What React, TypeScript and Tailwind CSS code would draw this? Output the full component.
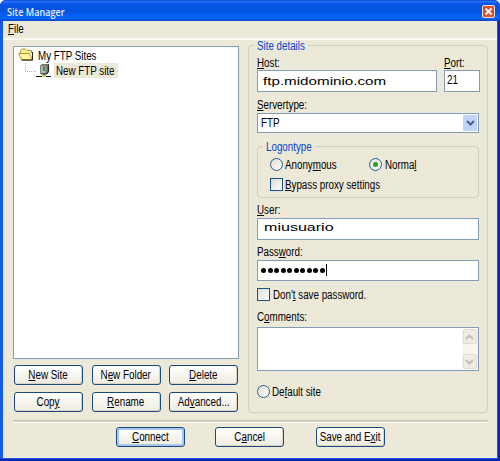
import type { ReactNode } from 'react'

function Label({ children, className = '' }: { children: ReactNode; className?: string }) {
  return (
    <div className={`h-3 text-[12px] leading-3 whitespace-nowrap ${className}`}>
      <span className="inline-block origin-left scale-x-[0.815]">{children}</span>
    </div>
  )
}

function Button({ children, primary = false }: { children: ReactNode; primary?: boolean }) {
  return (
    <button
      className={`flex h-5 w-[69px] shrink-0 items-center justify-center rounded-[3px] border border-[#1c4a80] bg-linear-to-b from-white to-[#eeebe0] text-[12px] leading-3 whitespace-nowrap ${primary ? 'shadow-[inset_0_0_0_2px_#a9c5f3]' : 'shadow-[inset_-1px_-1px_0_#d9d4c5]'}`}
    >
      <span className="inline-block scale-x-[0.82]">{children}</span>
    </button>
  )
}

function Radio({ checked = false }: { checked?: boolean }) {
  return (
    <span className="flex size-[13px] shrink-0 items-center justify-center rounded-full border border-[#2b5d8c] bg-linear-to-br from-[#dfded7] to-white">
      {checked && <span className="size-[5px] rounded-full bg-[#22a522]" />}
    </span>
  )
}

function Checkbox() {
  return <span className="size-[13px] shrink-0 border border-[#1c5180] bg-linear-to-br from-[#dcdcd5] to-white" />
}

function FolderIcon() {
  return (
    <svg className="-mt-[2px] h-[13px] w-4 shrink-0" viewBox="0 0 16 13">
      <path d="M2.5 8V2.5L4 1h3.5L9 2.5h4.5V5" fill="#f5ee99" stroke="#a8962f" />
      <path d="M.7 5.5h10.8l2.5 6H3.4z" fill="#fff6a0" stroke="#a8962f" />
      <path d="M3.5 12.2h11V4" fill="none" stroke="#292716" />
    </svg>
  )
}

function ServerIcon() {
  return (
    <svg className="h-[15px] w-4 shrink-0" viewBox="0 0 16 15">
      <path d="M4 2.5 6 1h7v7.5L11 11H4z" fill="#777" />
      <path d="M4.5 3H10v7.5H4.5z" fill="#b5b5b5" stroke="#858585" />
      <path d="M12.5 1.5v7L10.5 11H5" fill="none" stroke="#2c2c2c" strokeWidth="1.2" />
      <path d="M7 4h2v1H7z" fill="#d33" />
      <path d="M7 5h2v3H7z" fill="#19a653" />
      <path d="M8.5 11v2" stroke="#222" />
      <path d="M0 13h15v1H0z" fill="#111" />
      <path d="M6 12h4v2H6z" fill="#d6c84c" />
    </svg>
  )
}

function ScrollArrow({ up = false }: { up?: boolean }) {
  return (
    <span className="flex h-[15px] w-[14px] items-center justify-center rounded-[2px] border border-[#e1ded1] bg-[#efede3]">
      <svg className="h-[6px] w-[9px]" viewBox="0 0 9 6">
        <path d={up ? 'M1 5l3.5-3.5L8 5' : 'M1 1l3.5 3.5L8 1'} fill="none" stroke="#c3c1b4" strokeWidth="2" />
      </svg>
    </span>
  )
}

export default function SiteManager() {
  return (
    <main className="flex h-[461px] w-[500px] flex-col overflow-hidden rounded-t-[6px] bg-[#0b24b4] font-['Liberation_Sans',Arial,sans-serif] text-black">
      <header className="flex h-[21px] shrink-0 items-center justify-between bg-[linear-gradient(#0831b5_0,#2876ff_1px,#0754e7_4px,#0553df_11px,#0568ff_18px,#0346cb_21px)] pr-[5px] pl-[7px]">
        <h1 className="pt-[3px] font-['Open_Sans',sans-serif] text-[10px] leading-3 font-semibold whitespace-nowrap text-[#e4edff]">
          <span className="inline-block origin-left scale-x-[0.91]">Site Manager</span>
        </h1>
        <button className="mt-[2px] flex size-[13px] items-center justify-center rounded-[2px] border border-[#f1dfda] bg-[#da5132]">
          <svg className="size-[9px]" viewBox="0 0 9 9">
            <path d="M1.5 1.5l6 6m0-6-6 6" stroke="#fff" strokeWidth="1.8" />
          </svg>
        </button>
      </header>

      <div className="mr-[3px] mb-[3px] flex grow flex-col border-l-[3px] border-[#155cec] bg-[#ece9d8] shadow-[1px_1px_0_#155cec]">
        <nav className="h-[19px] border-b-2 border-[#faf9f2] pt-[2px] pl-[5px]">
          <Label><u>F</u>ile</Label>
        </nav>

        <div className="flex pt-[5px] pl-[10px]">
          <section className="mt-px w-[226px]">
            <div className="h-[313px] border border-[#7f9db9] bg-white pt-px pl-1">
              <div className="flex h-[15px] items-center">
                <FolderIcon />
                <Label className="ml-1">My FTP Sites</Label>
              </div>
              <div className="flex h-[15px] items-center">
                <span className="ml-[7px] h-[9px] w-[11px] self-start border-b border-l border-dotted border-[#b5b5ad]" />
                <ServerIcon />
                <span className="ml-[2px] flex h-[15px] w-[64px] items-center bg-[#ece9d8] pl-[2px]">
                  <Label>New FTP site</Label>
                </span>
              </div>
            </div>
            <div className="mt-[6px] ml-px grid grid-cols-[69px_69px_69px] gap-x-[8.5px] gap-y-[7px]">
              <Button><u>N</u>ew Site</Button>
              <Button>N<u>e</u>w Folder</Button>
              <Button><u>D</u>elete</Button>
              <Button>Cop<u>y</u></Button>
              <Button><u>R</u>ename</Button>
              <Button>Ad<u>v</u>anced...</Button>
            </div>
          </section>

          <section className="relative ml-[9px] h-[368px] w-[240px] rounded-[4px] border border-[#d0d0bf] pl-2">
            <Label className="absolute -top-[6px] left-[5px] w-[54px] bg-[#ece9d8] pl-[3px] text-[#0046d5]">Site details</Label>
            <div className="flex gap-[7px] pt-[11px]">
              <div className="w-[180px]">
                <Label><u>H</u>ost:</Label>
                <div className="mt-px flex h-[22px] items-center border border-[#7f9db9] bg-white pl-[5px]">
                  <span className="origin-left scale-x-[1.38] text-[11px] leading-3">ftp.midominio.com</span>
                </div>
              </div>
              <div className="w-9">
                <Label><u>P</u>ort:</Label>
                <div className="mt-px h-[22px] border border-[#7f9db9] bg-white pt-[3px] pl-[2px]">
                  <Label>21</Label>
                </div>
              </div>
            </div>

            <Label className="mt-[7px]"><u>S</u>ervertype:</Label>
            <div className="mt-[2px] flex h-5 w-[222px] items-center justify-between border border-[#7f9db9] bg-white pr-px pl-[3px]">
              <Label>FTP</Label>
              <span className="flex h-4 w-[14px] items-center justify-center rounded-[1px] bg-[#c1d3fb]">
                <svg className="h-[6px] w-[9px]" viewBox="0 0 9 6">
                  <path d="M1 1l3.5 3.5L8 1" fill="none" stroke="#4d6185" strokeWidth="2" />
                </svg>
              </span>
            </div>

            <div className="relative mt-[13px] h-[52px] w-[222px] rounded-[4px] border border-[#d0d0bf] pt-[11px] pl-3">
              <Label className="absolute -top-[6px] left-[5px] w-[52px] bg-[#ece9d8] pl-[3px] text-[#0046d5]">Logontype</Label>
              <div className="flex h-[13px] items-center">
                <Radio />
                <Label className="ml-[2px] w-[84px]">Anony<u>m</u>ous</Label>
                <Radio checked />
                <Label className="ml-[3px]">Norma<u>l</u></Label>
              </div>
              <div className="mt-[7px] flex items-center">
                <Checkbox />
                <Label className="ml-[2px]"><u>B</u>ypass proxy settings</Label>
              </div>
            </div>

            <Label className="mt-[6px]"><u>U</u>ser:</Label>
            <div className="mt-[2px] h-[22px] w-[222px] border border-[#7f9db9] bg-white pt-[2px] pl-[6px] text-[11px] leading-3">
              <span className="inline-block origin-left scale-x-[1.46]">miusuario</span>
            </div>

            <Label className="mt-[6px]">Pass<u>w</u>ord:</Label>
            <div className="mt-[2px] flex h-[21px] w-[222px] items-center border border-[#7f9db9] bg-white pl-[3px]">
              <span className="flex gap-[1.5px]">
                {Array.from({ length: 10 }, (_, i) => <span key={i} className="size-[5px] rounded-full bg-black" />)}
              </span>
              <span className="mb-[2px] ml-px h-3 w-px bg-black" />
            </div>
            <div className="mt-[7px] flex items-center">
              <Checkbox />
              <Label className="ml-[3px]">Don'<u>t</u> save password.</Label>
            </div>

            <Label className="mt-[10px]">C<u>o</u>mments:</Label>
            <div className="mt-[4px] flex h-11 w-[222px] justify-end border border-[#7f9db9] bg-white">
              <div className="my-px flex w-4 flex-col items-center justify-between bg-[#f7f5ee] pr-px">
                <ScrollArrow up />
                <ScrollArrow />
              </div>
            </div>
            <div className="mt-[14px] flex items-center">
              <Radio />
              <Label className="ml-[2px]">De<u>f</u>ault site</Label>
            </div>
          </section>
        </div>

        <div className="mt-[7px] ml-[10px] h-[3px] w-[475px] border-t border-b border-t-[#c4c1b0] border-b-white bg-[#d9d6c6]" />
        <footer className="mt-[4px] flex pl-[113px]">
          <Button primary><u>C</u>onnect</Button>
          <div className="mr-8 ml-[30px]">
            <Button>C<u>a</u>ncel</Button>
          </div>
          <Button>Save and E<u>x</u>it</Button>
        </footer>
      </div>
    </main>
  )
}
